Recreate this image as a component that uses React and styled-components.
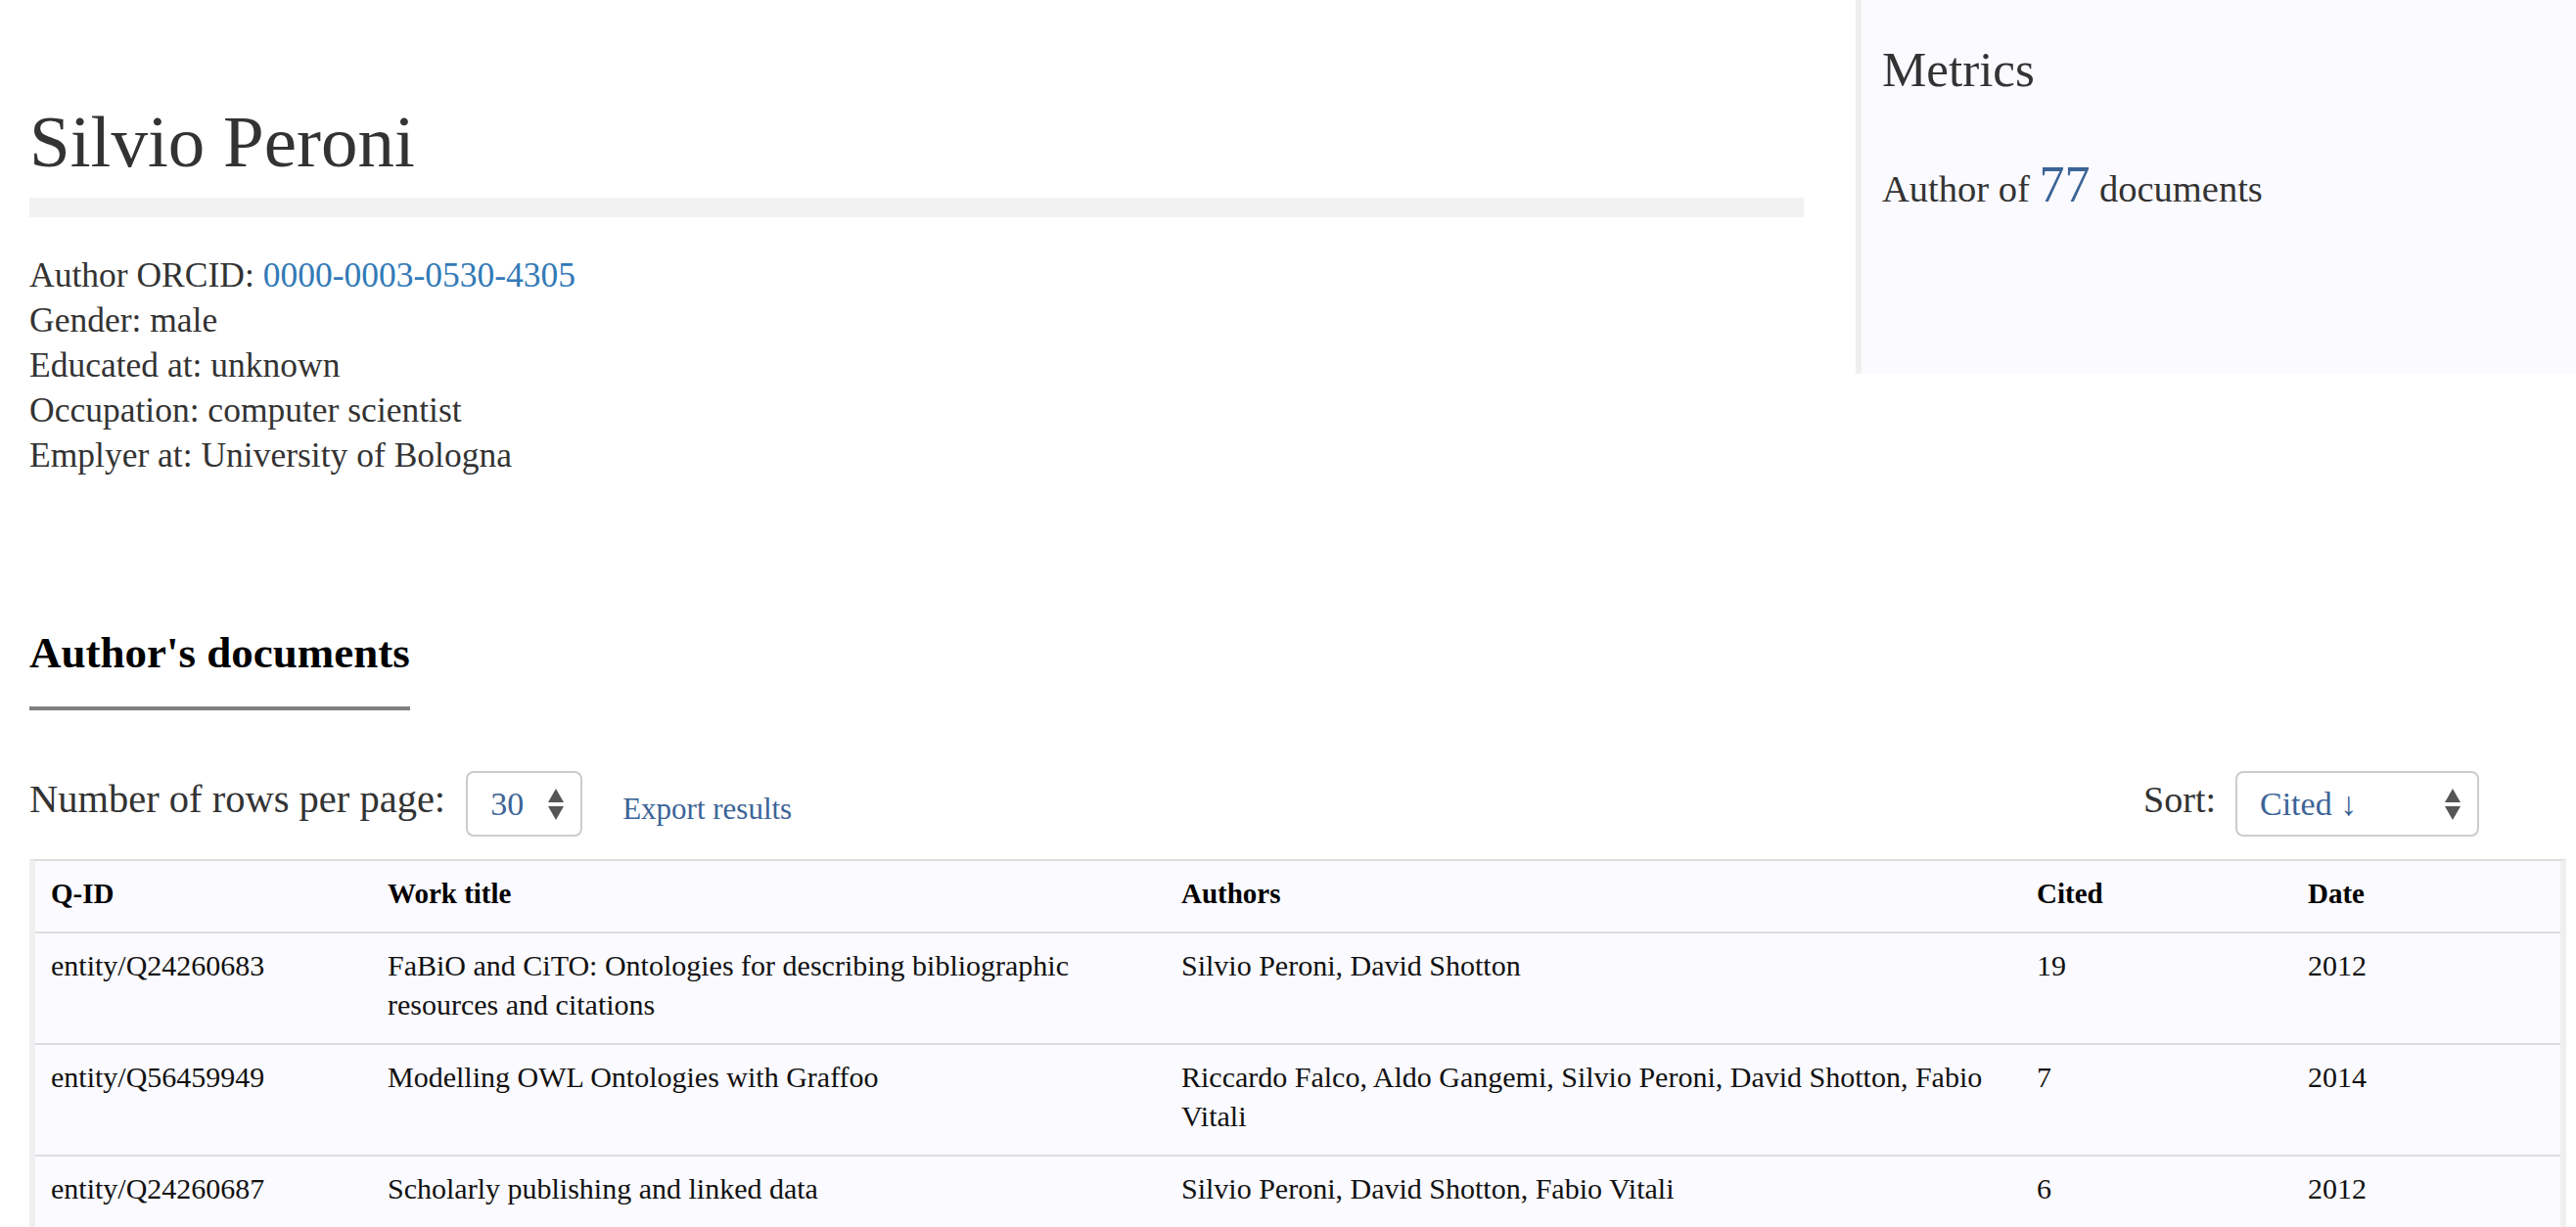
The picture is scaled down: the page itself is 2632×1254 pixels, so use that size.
import React from "react";
import styled, { createGlobalStyle } from "styled-components";

const GlobalStyle = createGlobalStyle`
  html, body {
    margin: 0;
    padding: 0;
    background: #ffffff;
  }
  body {
    font-family: "Liberation Serif", "Times New Roman", serif;
    color: #333333;
  }
  * { box-sizing: border-box; }
`;

const Page = styled.div`
  width: 2632px;
  min-height: 1254px;
`;

const TopSection = styled.div`
  display: grid;
  grid-template-columns: 1fr 736px;
`;

const Profile = styled.section`
  padding: 103px 53px 0 30px;
`;

const Name = styled.h1`
  margin: 0;
  font-size: 75px;
  line-height: 84px;
  font-weight: normal;
  color: #333333;
`;

const NameRule = styled.div`
  margin-top: 15px;
  height: 20px;
  background: #f2f2f2;
`;

const Facts = styled.div`
  margin-top: 36px;
  font-size: 35.5px;
  line-height: 46px;
  color: #333333;
`;

const Fact = styled.div``;

const FactLink = styled.a`
  color: #337ab7;
  text-decoration: none;
`;

const MetricsPanel = styled.aside`
  align-self: start;
  height: 382px;
  padding: 43px 21px 0 21px;
  background: #fbfaff;
  border-left: 6px solid #efefef;
`;

const PanelTitle = styled.h2`
  margin: 0;
  font-size: 51px;
  line-height: 56px;
  font-weight: normal;
  color: #333333;
`;

const MetricLine = styled.p`
  margin: 64px 0 0 0;
  font-size: 38.5px;
  line-height: 48px;
  color: #333333;
`;

const MetricCount = styled.span`
  font-size: 52px;
  line-height: 1;
  color: #3c6497;
`;

const DocsSection = styled.section`
  display: flex;
  flex-direction: column;
  margin-top: 155px;
  padding: 0 10px 0 30px;
`;

const SectionHeading = styled.h3`
  align-self: flex-start;
  margin: 0;
  font-size: 45px;
  line-height: 48px;
  font-weight: bold;
  color: #000000;
  padding-bottom: 31px;
  border-bottom: 4px solid #7f7f7f;
`;

const Toolbar = styled.div`
  display: flex;
  align-items: center;
  margin-top: 62px;
  height: 67px;
`;

const ToolLabel = styled.span`
  font-size: ${(p) => p.$size || 40.5}px;
  line-height: 46px;
  padding-bottom: 10px;
  color: #333333;
  white-space: nowrap;
`;

const SelectBox = styled.div`
  display: flex;
  align-items: center;
  justify-content: space-between;
  width: ${(p) => p.$width}px;
  height: 67px;
  margin-left: ${(p) => p.$gap}px;
  padding: 0 17px 0 23px;
  border: 2px solid #cccccc;
  border-radius: 8px;
  background: #ffffff;
`;

const SelectValue = styled.span`
  font-size: 34px;
  line-height: 40px;
  color: #3c6497;
  white-space: nowrap;
`;

const ExportLink = styled.a`
  margin-left: 41px;
  padding-top: 10px;
  font-size: 31px;
  line-height: 40px;
  color: #3c6497;
  text-decoration: none;
`;

const SortGroup = styled.div`
  display: flex;
  align-items: center;
  margin-left: auto;
  margin-right: 89px;
`;

const TableFrame = styled.div`
  margin-top: 23px;
  border-top: 2px solid #dddddd;
  border-left: 6px solid #efefef;
  border-right: 6px solid #efefef;
  background: #fbfaff;
`;

const DocTable = styled.table`
  width: 100%;
  border-collapse: separate;
  border-spacing: 0;
  table-layout: fixed;
`;

const HeadCell = styled.th`
  text-align: left;
  vertical-align: top;
  padding: 13px 16px 19px 16px;
  font-size: 29px;
  line-height: 40px;
  font-weight: bold;
  color: #000000;
  border-bottom: 2px solid #dddddd;
`;

const Cell = styled.td`
  vertical-align: top;
  padding: 13px 16px 19px 16px;
  font-size: 30px;
  line-height: 40px;
  color: #111111;
  border-bottom: 2px solid #dddddd;
`;

const SelectArrows = () => (
  <svg width="16" height="32" viewBox="0 0 16 32" aria-hidden="true">
    <polygon points="8,0 16,14 0,14" fill="#555555" />
    <polygon points="0,18 16,18 8,32" fill="#555555" />
  </svg>
);

const columns = [
  { label: "Q-ID", width: 344 },
  { label: "Work title", width: 811 },
  { label: "Authors", width: 874 },
  { label: "Cited", width: 277 },
  { label: "Date" },
];

const documents = [
  {
    id: "entity/Q24260683",
    title: "FaBiO and CiTO: Ontologies for describing bibliographic resources and citations",
    authors: "Silvio Peroni, David Shotton",
    cited: "19",
    date: "2012",
  },
  {
    id: "entity/Q56459949",
    title: "Modelling OWL Ontologies with Graffoo",
    authors: "Riccardo Falco, Aldo Gangemi, Silvio Peroni, David Shotton, Fabio Vitali",
    cited: "7",
    date: "2014",
  },
  {
    id: "entity/Q24260687",
    title: "Scholarly publishing and linked data",
    authors: "Silvio Peroni, David Shotton, Fabio Vitali",
    cited: "6",
    date: "2012",
  },
];

export default function App() {
  return (
    <Page>
      <GlobalStyle />
      <TopSection>
        <Profile>
          <Name>Silvio Peroni</Name>
          <NameRule />
          <Facts>
            <Fact>
              Author ORCID: <FactLink href="#">0000-0003-0530-4305</FactLink>
            </Fact>
            <Fact>Gender: male</Fact>
            <Fact>Educated at: unknown</Fact>
            <Fact>Occupation: computer scientist</Fact>
            <Fact>Emplyer at: University of Bologna</Fact>
          </Facts>
        </Profile>
        <MetricsPanel>
          <PanelTitle>Metrics</PanelTitle>
          <MetricLine>
            Author of <MetricCount>77</MetricCount> documents
          </MetricLine>
        </MetricsPanel>
      </TopSection>

      <DocsSection>
        <SectionHeading>Author's documents</SectionHeading>
        <Toolbar>
          <ToolLabel>Number of rows per page:</ToolLabel>
          <SelectBox $width={119} $gap={21}>
            <SelectValue>30</SelectValue>
            <SelectArrows />
          </SelectBox>
          <ExportLink href="#">Export results</ExportLink>
          <SortGroup>
            <ToolLabel $size={38}>Sort:</ToolLabel>
            <SelectBox $width={249} $gap={20}>
              <SelectValue>Cited ↓</SelectValue>
              <SelectArrows />
            </SelectBox>
          </SortGroup>
        </Toolbar>
        <TableFrame>
          <DocTable>
            <colgroup>
              {columns.map((c) => (
                <col key={c.label} style={c.width ? { width: c.width } : undefined} />
              ))}
            </colgroup>
            <thead>
              <tr>
                {columns.map((c) => (
                  <HeadCell key={c.label}>{c.label}</HeadCell>
                ))}
              </tr>
            </thead>
            <tbody>
              {documents.map((d) => (
                <tr key={d.id}>
                  <Cell>{d.id}</Cell>
                  <Cell>{d.title}</Cell>
                  <Cell>{d.authors}</Cell>
                  <Cell>{d.cited}</Cell>
                  <Cell>{d.date}</Cell>
                </tr>
              ))}
            </tbody>
          </DocTable>
        </TableFrame>
      </DocsSection>
    </Page>
  );
}
